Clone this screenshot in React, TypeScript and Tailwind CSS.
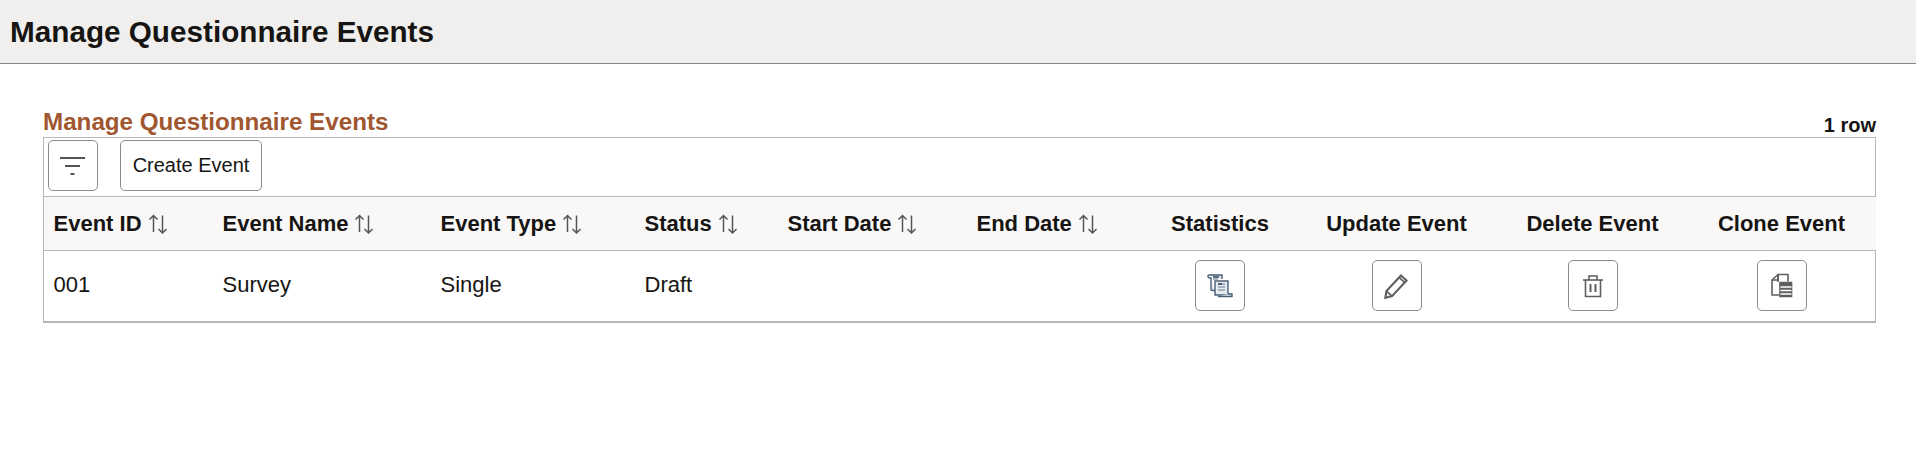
const cols = [
  { label: "Event ID", sort: true, width: "w-[169px]" },
  { label: "Event Name", sort: true, width: "w-[218px]" },
  { label: "Event Type", sort: true, width: "w-[204px]" },
  { label: "Status", sort: true, width: "w-[143px]" },
  { label: "Start Date", sort: true, width: "w-[189px]" },
  { label: "End Date", sort: true, width: "w-[178px]" },
  { label: "Statistics", sort: false, width: "w-[150px]" },
  { label: "Update Event", sort: false, width: "w-[203px]" },
  { label: "Delete Event", sort: false, width: "w-[189px]" },
  { label: "Clone Event", sort: false, width: "w-[189px]" },
];

function SortIcon() {
  return (
    <svg width="20" height="22" viewBox="0 0 20 22" fill="none" stroke="#555" strokeWidth="1.5" className="ml-[6px] shrink-0">
      <path d="M5.500 19V2.500M1.500 6.500L5.500 2.500 9.500 6.500" />
      <path d="M14.500 2.500V20M10.500 16l4 4 4-4" />
    </svg>
  );
}

function FilterIcon() {
  return (
    <svg width="26" height="20" viewBox="0 0 26 20" fill="#555">
      <rect x="0" y="1" width="25" height="2" />
      <rect x="5" y="9" width="15" height="2" />
      <rect x="10.500" y="17" width="4" height="2" />
    </svg>
  );
}

function ScrollsIcon() {
  return (
    <svg width="26" height="26" viewBox="0 0 26 26" fill="none" stroke="#4a6078" strokeWidth="1.400">
      <path d="M2 2h13v4M2 2c-1.500 0-1.500 3 0.500 3H4v11c0 1 1 1.500 2 1.500h2" fill="#e4eaf0" />
      <path d="M8 8h13v14H8z" fill="#e4eaf0" />
      <path d="M6 6h5M11 11h7M11 14h7M11 17h7" stroke="#8ea1b4" />
      <path d="M11 23.500h14v-2.500H21" fill="#dbe3ea" />
      <path d="M6 4h6M11 11h4" stroke="#2f4358" />
    </svg>
  );
}

function PencilIcon() {
  return (
    <svg width="27" height="29" viewBox="0 0 24 26" fill="none" stroke="#5f5f5f" strokeWidth="1.900">
      <path d="M2 24l1-6L16 4l5 4.500L8 22.500z" />
      <path d="M3 18l5 4.500" strokeWidth="1.500" />
      <path d="M14.500 6l5 4.500" strokeWidth="1.500" />
    </svg>
  );
}

function TrashIcon() {
  return (
    <svg width="22" height="24" viewBox="0 0 22 24" fill="none" stroke="#5f5f5f" strokeWidth="1.600">
      <path d="M1 6h20" />
      <path d="M7 6V2h8v4" />
      <path d="M3.500 6v16.500h15V6" />
      <path d="M8.500 10v8M13.500 10v8" strokeWidth="2" />
    </svg>
  );
}

function CloneIcon() {
  return (
    <svg width="24" height="26" viewBox="0 0 24 26" fill="none" stroke="#5f5f5f" strokeWidth="1.600">
      <path d="M8 9V1.500h10v7" />
      <path d="M8 1.500L2 7v15h7" />
      <path d="M2 7h6V1.500" />
      <path d="M10 9.500h11.500v14H10z" fill="#5f5f5f" />
      <path d="M10.500 14h11M10.500 17.500h11M10.500 21h11" stroke="#fff" strokeWidth="1.300" />
    </svg>
  );
}

function IconButton({ children }: { children: React.ReactNode }) {
  return (
    <button className="inline-flex items-center justify-center w-[50px] h-[51px] rounded-[5px] border border-[#8f8a85] bg-white align-middle">
      {children}
    </button>
  );
}

export default function App() {
  return (
    <div className="min-h-[460px] bg-white text-[#161513] font-['Liberation_Sans',Arial,sans-serif]">
      <header className="flex items-center h-[64px] pl-[10px] bg-[#f1efed] border-b border-[#8a8886]">
        <h1 className="text-[29.700px] font-bold leading-none">Manage Questionnaire Events</h1>
      </header>

      <main className="pl-[43px] pr-[40px] pt-[44px]">
        <div className="flex items-end justify-between h-[29px]">
          <h2 className="text-[24.200px] font-bold leading-[31px] text-[#a0562f]">Manage Questionnaire Events</h2>
          <span className="text-[20px] font-bold leading-[23px]">1 row</span>
        </div>

        <div className="border border-b-2 border-[#bcb6b1]">
          <div className="flex items-start h-[58px] pl-[4px] pt-[2px] gap-[22px]">
            <button className="flex items-center justify-center w-[50px] h-[51px] rounded-[5px] border border-[#8f8a85] bg-white">
              <FilterIcon />
            </button>
            <button className="h-[51px] w-[142px] rounded-[5px] border border-[#8f8a85] bg-white text-[20px] pb-[2px]">Create Event</button>
          </div>

          <table className="w-full table-fixed border-collapse text-[22px]">
            <colgroup>
              {cols.map((c) => (
                <col key={c.label} className={c.width} />
              ))}
            </colgroup>
            <thead>
              <tr className="h-[54px] bg-[#f9f8f7] border-y border-[#bcb6b1]">
                {cols.map((c) => (
                  <th key={c.label} className={`font-bold px-[9.500px] ${c.sort ? "text-left" : "text-center"}`}>
                    {c.sort ? (
                      <span className="inline-flex items-center">
                        {c.label}
                        <SortIcon />
                      </span>
                    ) : (
                      c.label
                    )}
                  </th>
                ))}
              </tr>
            </thead>
            <tbody>
              <tr className="h-[70px]">
                <td className="px-[9.500px] pb-[2px]">001</td>
                <td className="px-[9.500px] pb-[2px]">Survey</td>
                <td className="px-[9.500px] pb-[2px]">Single</td>
                <td className="px-[9.500px] pb-[2px]">Draft</td>
                <td className="px-[9.500px]" />
                <td className="px-[9.500px]" />
                <td className="text-center"><IconButton><ScrollsIcon /></IconButton></td>
                <td className="text-center"><IconButton><PencilIcon /></IconButton></td>
                <td className="text-center"><IconButton><TrashIcon /></IconButton></td>
                <td className="text-center"><IconButton><CloneIcon /></IconButton></td>
              </tr>
            </tbody>
          </table>
        </div>
      </main>
    </div>
  );
}
